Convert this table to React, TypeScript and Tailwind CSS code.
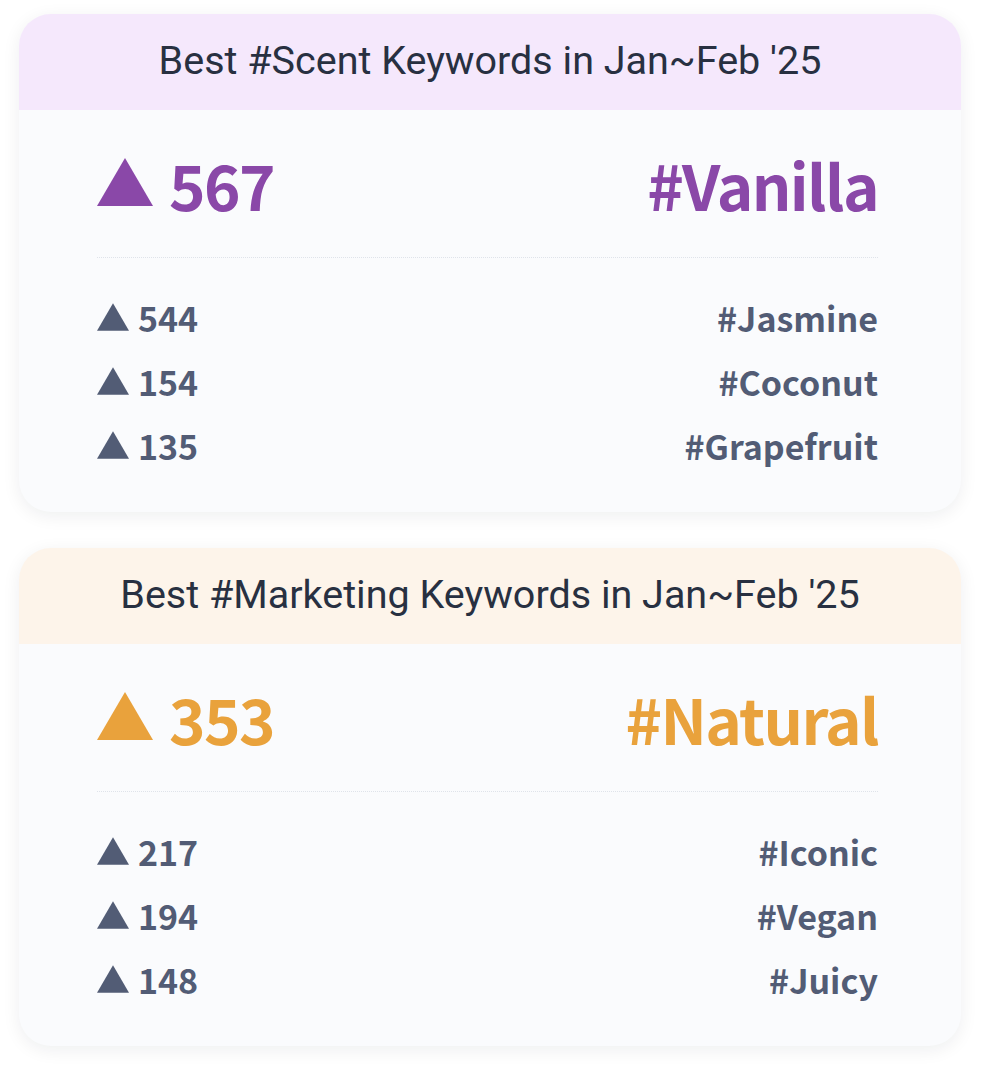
const rankFont = { fontFamily: '"Noto Sans CJK SC", "Noto Sans", sans-serif' };

type Card = {
  title: string;
  headBg: string;
  accent: string;
  top: { count: number; tag: string };
  rest: { count: number; tag: string }[];
};

const cards: Card[] = [
  {
    title: "Best #Scent Keywords in Jan~Feb '25",
    headBg: "bg-[#f5e8fc]",
    accent: "text-[#8a48a8]",
    top: { count: 567, tag: "#Vanilla" },
    rest: [
      { count: 544, tag: "#Jasmine" },
      { count: 154, tag: "#Coconut" },
      { count: 135, tag: "#Grapefruit" },
    ],
  },
  {
    title: "Best #Marketing Keywords in Jan~Feb '25",
    headBg: "bg-[#fdf4ea]",
    accent: "text-[#e9a23c]",
    top: { count: 353, tag: "#Natural" },
    rest: [
      { count: 217, tag: "#Iconic" },
      { count: 194, tag: "#Vegan" },
      { count: 148, tag: "#Juicy" },
    ],
  },
];

const Triangle = ({ className }: { className: string }) => (
  <svg viewBox="0 0 56 48" className={className} fill="currentColor">
    <polygon points="28,0 56,48 0,48" />
  </svg>
);

const KeywordCard = ({ card }: { card: Card }) => (
  <div className="w-[942px] rounded-[32px] overflow-hidden bg-[#fafbfd] shadow-[0_4px_18px_rgba(15,23,42,0.07)]">
    <div className={`${card.headBg} h-[96px] flex items-center justify-center`}>
      <p
        className="text-[39.5px] text-[#283041] mt-[-2px]"
        style={{ fontFamily: "Roboto, sans-serif" }}
      >
        {card.title}
      </p>
    </div>

    <div className="pl-[78px] pr-[83px]">
      <div className={`h-[147px] flex items-center justify-between ${card.accent}`} style={rankFont}>
        <div className="flex items-center gap-[16px]">
          <Triangle className="w-[56px] h-[48px] mt-[-4px]" />
          <span className="text-[62px] font-bold leading-none tracking-[-1.6px]">{card.top.count}</span>
        </div>
        <span className="text-[62px] font-bold leading-none tracking-[-1.6px]">{card.top.tag}</span>
      </div>

      <div className="border-t border-dotted border-[#dfe3ea]"></div>

      <div className="pt-[28px] pb-[34px] text-[#525c75]" style={rankFont}>
        {card.rest.map((row) => (
          <div key={row.tag} className="h-[64px] flex items-center justify-between">
            <div className="flex items-center gap-[9px]">
              <Triangle className="w-[32px] h-[28px] mt-[-2px]" />
              <span className="text-[34px] font-bold leading-none">{row.count}</span>
            </div>
            <span className="text-[34px] font-bold leading-none">{row.tag}</span>
          </div>
        ))}
      </div>
    </div>
  </div>
);

export default function App() {
  return (
    <div className="w-[990px] h-[1072px] bg-white pt-[14px] pl-[19px] flex flex-col gap-[36px]">
      {cards.map((c) => (
        <KeywordCard key={c.title} card={c} />
      ))}
    </div>
  );
}
